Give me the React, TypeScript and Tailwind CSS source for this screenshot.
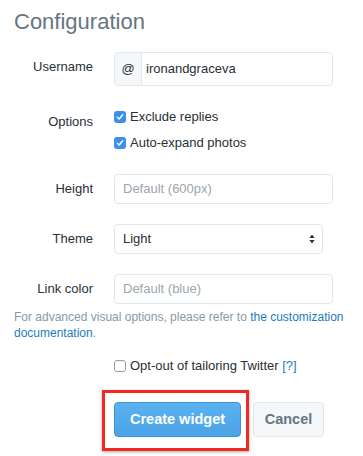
import type { ReactNode } from 'react';

function Check({ checked }: { checked: boolean }) {
  if (!checked) {
    return <span className="inline-block w-[12px] h-[12px] rounded-[3px] border border-[#9a9a9a] bg-white shrink-0" />;
  }
  return (
    <span className="inline-flex items-center justify-center w-[12px] h-[12px] rounded-[3px] bg-[#3b8ff0] shrink-0">
      <svg width="8" height="8" viewBox="0 0 8 8" fill="none">
        <path d="M1.3 4.2 L3.2 6 L6.7 1.8" stroke="white" strokeWidth="1.5" strokeLinecap="round" strokeLinejoin="round" />
      </svg>
    </span>
  );
}

function Row({ label, children, className = '' }: { label: string; children: ReactNode; className?: string }) {
  return (
    <div className={`flex items-center ${className}`}>
      <div className="w-[79px] text-right text-[13px] text-[#292f33] leading-[16px]">{label}</div>
      <div className="ml-[21px]">{children}</div>
    </div>
  );
}

export default function App() {
  return (
    <div className="w-[363px] h-[456px] bg-white overflow-hidden pl-[14px] pt-[11px] font-['Liberation_Sans',Arial,sans-serif]">
      <h2 className="text-[22px] leading-[22px] text-[#66757f]">Configuration</h2>

      <div className="flex mt-[19px]">
        <div className="w-[79px] text-right text-[13px] text-[#292f33] leading-[16px] pt-[7px]">Username</div>
        <div className="ml-[21px] flex w-[219px] h-[34px] border border-[#e1e8ed] rounded-[4px] overflow-hidden">
          <div className="w-[27px] bg-[#f5f8fa] border-r border-[#e1e8ed] flex items-center justify-center text-[13px] text-[#292f33]">@</div>
          <div className="flex items-center pl-[4px] text-[13px] text-[#292f33]">ironandgraceva</div>
        </div>
      </div>

      <div className="flex mt-[22px]">
        <div className="w-[79px] text-right text-[13px] text-[#292f33] leading-[16px] pt-[6px]">Options</div>
        <div className="ml-[21px] flex flex-col gap-[8px]">
          <label className="flex items-center gap-[4px] h-[18px] text-[13px] text-[#292f33]">
            <Check checked />
            <span>Exclude replies</span>
          </label>
          <label className="flex items-center gap-[4px] h-[18px] text-[13px] text-[#292f33]">
            <Check checked />
            <span>Auto-expand photos</span>
          </label>
        </div>
      </div>

      <Row label="Height" className="mt-[22px]">
        <div className="w-[219px] h-[30px] border border-[#e1e8ed] rounded-[4px] flex items-center pl-[8px] text-[13px] text-[#9ba6ae]">
          Default (600px)
        </div>
      </Row>

      <Row label="Theme" className="mt-[20px]">
        <div className="w-[209px] h-[30px] border border-[#e1e8ed] rounded-[4px] flex items-center justify-between pl-[8px] pr-[7px] text-[13px] text-[#292f33]">
          <span>Light</span>
          <svg width="6" height="10" viewBox="0 0 6 10">
            <path d="M3 0.5 L5.6 4 L0.4 4 Z" fill="#333" />
            <path d="M3 9.5 L5.6 6 L0.4 6 Z" fill="#333" />
          </svg>
        </div>
      </Row>

      <Row label="Link color" className="mt-[20px]">
        <div className="w-[219px] h-[30px] border border-[#e1e8ed] rounded-[4px] flex items-center pl-[8px] text-[13px] text-[#9ba6ae]">
          Default (blue)
        </div>
      </Row>

      <div className="mt-[5px] text-[12px] leading-[16px] text-[#8899a6]">
        <p>
          For advanced visual options, please refer to <a className="text-[#1b7bbf]">the customization</a>
        </p>
        <p>
          <a className="text-[#1b7bbf]">documentation</a>.
        </p>
      </div>

      <div className="mt-[16px] ml-[100px] flex items-center gap-[4px] h-[18px] text-[13px] text-[#292f33]">
        <Check checked={false} />
        <span>
          Opt-out of tailoring Twitter <a className="text-[#1b7bbf]">[?]</a>
        </span>
      </div>

      <div className="relative mt-[27px] ml-[100px] flex gap-[12px]">
        <button className="w-[127px] h-[35px] rounded-[4px] border border-[#3b94d9] bg-gradient-to-b from-[#5bb2f0] to-[#4ba3e6] text-white font-bold text-[14.5px]">
          Create widget
        </button>
        <button className="w-[71px] h-[35px] rounded-[4px] border border-[#e1e8ed] bg-[#f5f8fa] text-[#66757f] font-bold text-[14.5px]">
          Cancel
        </button>
        <div className="absolute left-[-12px] top-[-12px] w-[147px] h-[61px] border-[3px] border-[#ee2a24] shadow-[0_1px_3px_rgba(0,0,0,0.35)] pointer-events-none" />
      </div>
    </div>
  );
}
